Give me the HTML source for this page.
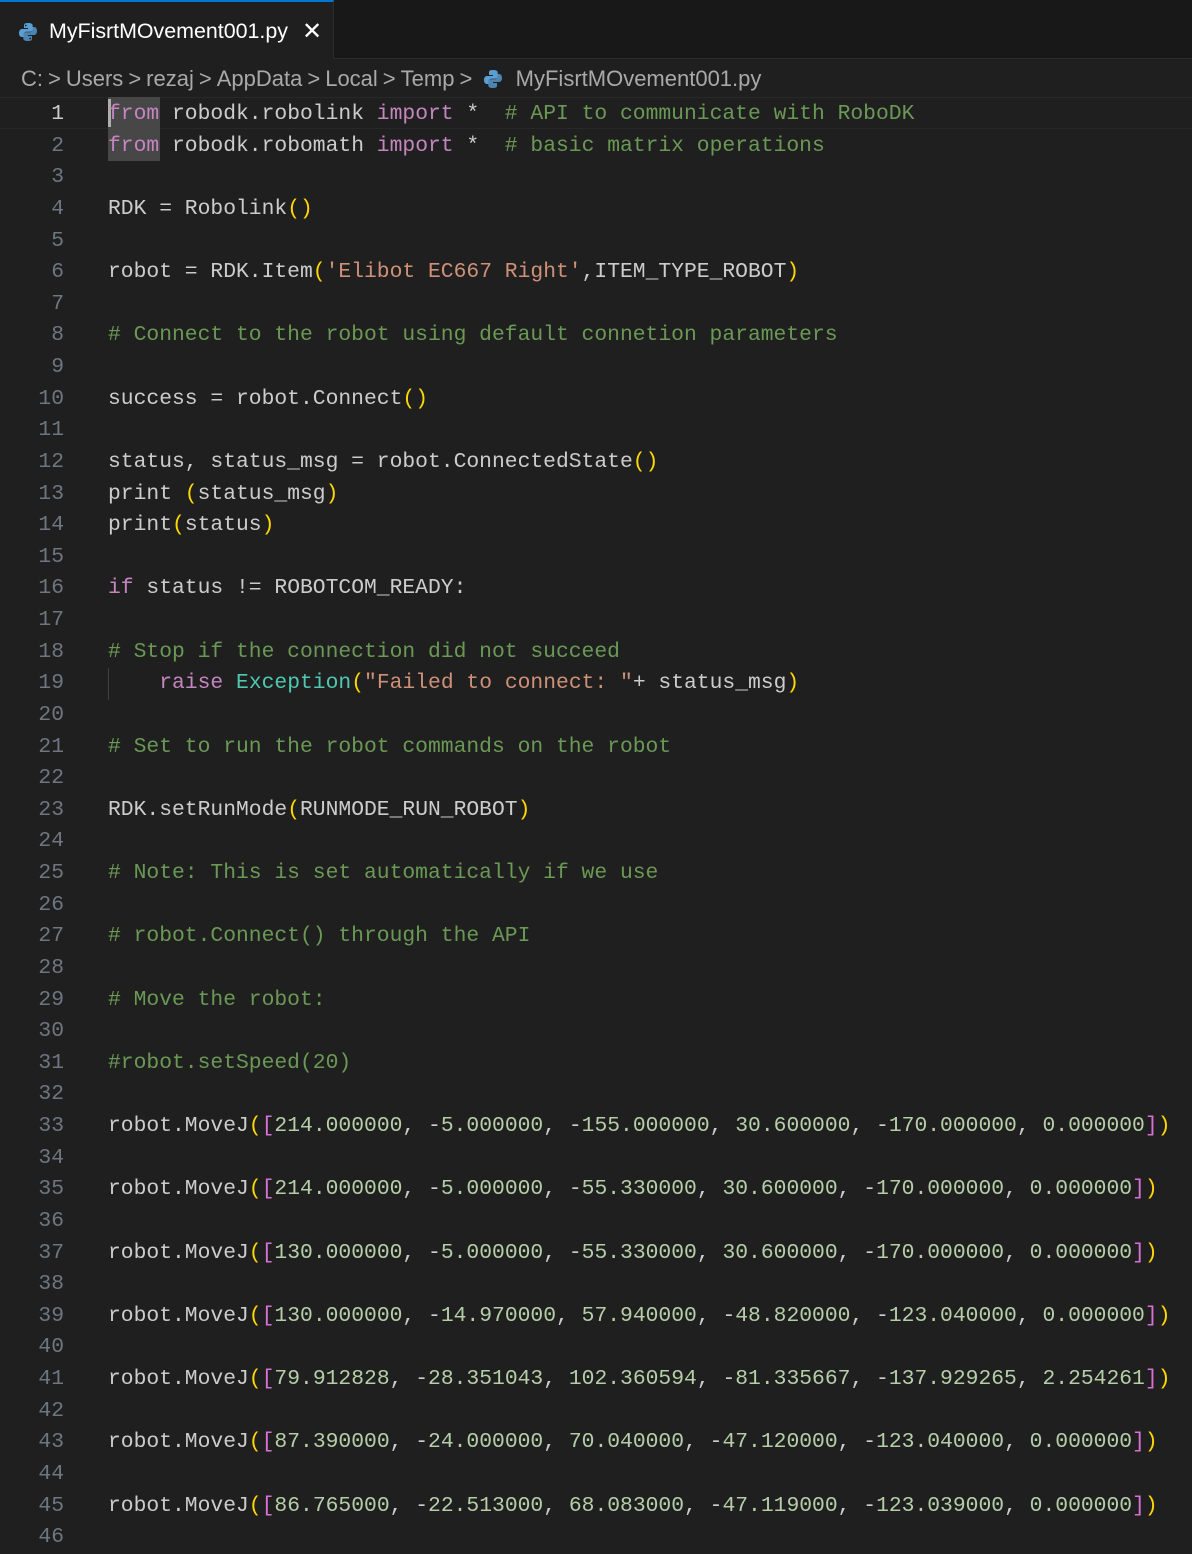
<!DOCTYPE html>
<html><head><meta charset="utf-8"><style>
html,body{margin:0;padding:0;background:#1f1f1f;width:1192px;height:1554px;overflow:hidden;position:relative}
.tabs{position:absolute;left:0;top:0;width:1192px;height:58px;background:#181818;border-bottom:1px solid #2b2b2b}
.tab{position:absolute;left:0;top:0;width:334px;height:59px;background:#1f1f1f;border-top:2px solid #0078d4;box-sizing:border-box;border-right:1px solid #2b2b2b}
.tab .name{position:absolute;left:49px;top:17px;font:21.4px "Liberation Sans",sans-serif;color:#fff}
.tab .x{position:absolute;left:302px;top:15px;font:24px "Liberation Sans",sans-serif;color:#fff}
.crumb{position:absolute;left:21px;top:66px;font:22px "Liberation Sans",sans-serif;color:#a9a9a9;white-space:pre}
.crumb .sep{margin:0 5px}
.code{position:absolute;left:0;top:97px;width:1192px;overflow:hidden;font:21.33px "Liberation Mono",monospace;color:#cccccc}
.l{height:31.64px;line-height:31.64px;position:relative;white-space:pre}
.ln{position:absolute;left:0;top:2px;width:64px;text-align:right;color:#6e7681}
.ln.a{color:#cccccc}
.t{position:absolute;left:108px;top:2px}
.k{color:#c586c0}.c{color:#6a9955}.s{color:#ce9178}.n{color:#b5cea8}.y{color:#ffd700}.p{color:#da70d6}.e{color:#4ec9b0}
.hlb{position:absolute;left:108px;width:52px;height:32px;background:#474747}
.cur{position:absolute;left:0;top:97px;width:1192px;height:30px;border-top:1px solid #282828;border-bottom:1px solid #282828}
</style></head><body>
<div class="tabs"><div class="tab">
<svg style="position:absolute;left:18px;top:20px" width="20" height="20" viewBox="0 0 20 20"><path d="M9.8 1C6 1 6 2.6 6 3.5V6h4v1H4.3C2.5 7 1 8.3 1 11s1.3 4 3 4h1.5v-2.5c0-1.6 1.3-2.8 2.9-2.8h4c1.3 0 2.3-1 2.3-2.3V3.5C14.7 2 13.3 1 9.8 1zM7.8 2.6a.9.9 0 110 1.8.9.9 0 010-1.8z" fill="#5a9fd4"/><path d="M10.2 19c3.8 0 3.8-1.6 3.8-2.5V14h-4v-1h5.7c1.8 0 3.3-1.3 3.3-4s-1.3-4-3-4h-1.5v2.5c0 1.6-1.3 2.8-2.9 2.8h-4c-1.3 0-2.3 1-2.3 2.3v3.9C5.3 18 6.7 19 10.2 19zm2-1.6a.9.9 0 110-1.8.9.9 0 010 1.8z" fill="#5a9fd4" opacity=".8"/></svg>
<span class="name">MyFisrtMOvement001.py</span><span class="x">✕</span></div></div>
<div class="crumb">C:<span class="sep">&gt;</span>Users<span class="sep">&gt;</span>rezaj<span class="sep">&gt;</span>AppData<span class="sep">&gt;</span>Local<span class="sep">&gt;</span>Temp<span class="sep">&gt;</span> <svg width="20" height="20" viewBox="0 0 20 20" style="vertical-align:-3px"><path d="M9.8 1C6 1 6 2.6 6 3.5V6h4v1H4.3C2.5 7 1 8.3 1 11s1.3 4 3 4h1.5v-2.5c0-1.6 1.3-2.8 2.9-2.8h4c1.3 0 2.3-1 2.3-2.3V3.5C14.7 2 13.3 1 9.8 1z" fill="#5a9fd4"/><path d="M10.2 19c3.8 0 3.8-1.6 3.8-2.5V14h-4v-1h5.7c1.8 0 3.3-1.3 3.3-4s-1.3-4-3-4h-1.5v2.5c0 1.6-1.3 2.8-2.9 2.8h-4c-1.3 0-2.3 1-2.3 2.3v3.9C5.3 18 6.7 19 10.2 19z" fill="#5a9fd4" opacity=".8"/></svg>  MyFisrtMOvement001.py</div>
<div class="cur"></div>
<div class="hlb" style="top:97px"></div>
<div class="hlb" style="top:129px"></div>
<div style="position:absolute;left:108px;top:99px;width:3px;height:28px;background:#aeafad"></div>
<div style="position:absolute;left:108px;top:668px;width:1px;height:32px;background:#404040"></div>
<div class="code">
<div class="l"><span class="ln a">1</span><span class="t"><span class="k">from</span> robodk.robolink <span class="k">import</span> *  <span class="c"># API to communicate with RoboDK</span></span></div>
<div class="l"><span class="ln">2</span><span class="t"><span class="k">from</span> robodk.robomath <span class="k">import</span> *  <span class="c"># basic matrix operations</span></span></div>
<div class="l"><span class="ln">3</span></div>
<div class="l"><span class="ln">4</span><span class="t">RDK = Robolink<span class="y">()</span></span></div>
<div class="l"><span class="ln">5</span></div>
<div class="l"><span class="ln">6</span><span class="t">robot = RDK.Item<span class="y">(</span><span class="s">'Elibot EC667 Right'</span>,ITEM_TYPE_ROBOT<span class="y">)</span></span></div>
<div class="l"><span class="ln">7</span></div>
<div class="l"><span class="ln">8</span><span class="t"><span class="c"># Connect to the robot using default connetion parameters</span></span></div>
<div class="l"><span class="ln">9</span></div>
<div class="l"><span class="ln">10</span><span class="t">success = robot.Connect<span class="y">()</span></span></div>
<div class="l"><span class="ln">11</span></div>
<div class="l"><span class="ln">12</span><span class="t">status, status_msg = robot.ConnectedState<span class="y">()</span></span></div>
<div class="l"><span class="ln">13</span><span class="t">print <span class="y">(</span>status_msg<span class="y">)</span></span></div>
<div class="l"><span class="ln">14</span><span class="t">print<span class="y">(</span>status<span class="y">)</span></span></div>
<div class="l"><span class="ln">15</span></div>
<div class="l"><span class="ln">16</span><span class="t"><span class="k">if</span> status != ROBOTCOM_READY:</span></div>
<div class="l"><span class="ln">17</span></div>
<div class="l"><span class="ln">18</span><span class="t"><span class="c"># Stop if the connection did not succeed</span></span></div>
<div class="l"><span class="ln">19</span><span class="t">    <span class="k">raise</span> <span class="e">Exception</span><span class="y">(</span><span class="s">"Failed to connect: "</span>+ status_msg<span class="y">)</span></span></div>
<div class="l"><span class="ln">20</span></div>
<div class="l"><span class="ln">21</span><span class="t"><span class="c"># Set to run the robot commands on the robot</span></span></div>
<div class="l"><span class="ln">22</span></div>
<div class="l"><span class="ln">23</span><span class="t">RDK.setRunMode<span class="y">(</span>RUNMODE_RUN_ROBOT<span class="y">)</span></span></div>
<div class="l"><span class="ln">24</span></div>
<div class="l"><span class="ln">25</span><span class="t"><span class="c"># Note: This is set automatically if we use</span></span></div>
<div class="l"><span class="ln">26</span></div>
<div class="l"><span class="ln">27</span><span class="t"><span class="c"># robot.Connect() through the API</span></span></div>
<div class="l"><span class="ln">28</span></div>
<div class="l"><span class="ln">29</span><span class="t"><span class="c"># Move the robot:</span></span></div>
<div class="l"><span class="ln">30</span></div>
<div class="l"><span class="ln">31</span><span class="t"><span class="c">#robot.setSpeed(20)</span></span></div>
<div class="l"><span class="ln">32</span></div>
<div class="l"><span class="ln">33</span><span class="t">robot.MoveJ<span class="y">(</span><span class="p">[</span><span class="n">214.000000</span>, -<span class="n">5.000000</span>, -<span class="n">155.000000</span>, <span class="n">30.600000</span>, -<span class="n">170.000000</span>, <span class="n">0.000000</span><span class="p">]</span><span class="y">)</span></span></div>
<div class="l"><span class="ln">34</span></div>
<div class="l"><span class="ln">35</span><span class="t">robot.MoveJ<span class="y">(</span><span class="p">[</span><span class="n">214.000000</span>, -<span class="n">5.000000</span>, -<span class="n">55.330000</span>, <span class="n">30.600000</span>, -<span class="n">170.000000</span>, <span class="n">0.000000</span><span class="p">]</span><span class="y">)</span></span></div>
<div class="l"><span class="ln">36</span></div>
<div class="l"><span class="ln">37</span><span class="t">robot.MoveJ<span class="y">(</span><span class="p">[</span><span class="n">130.000000</span>, -<span class="n">5.000000</span>, -<span class="n">55.330000</span>, <span class="n">30.600000</span>, -<span class="n">170.000000</span>, <span class="n">0.000000</span><span class="p">]</span><span class="y">)</span></span></div>
<div class="l"><span class="ln">38</span></div>
<div class="l"><span class="ln">39</span><span class="t">robot.MoveJ<span class="y">(</span><span class="p">[</span><span class="n">130.000000</span>, -<span class="n">14.970000</span>, <span class="n">57.940000</span>, -<span class="n">48.820000</span>, -<span class="n">123.040000</span>, <span class="n">0.000000</span><span class="p">]</span><span class="y">)</span></span></div>
<div class="l"><span class="ln">40</span></div>
<div class="l"><span class="ln">41</span><span class="t">robot.MoveJ<span class="y">(</span><span class="p">[</span><span class="n">79.912828</span>, -<span class="n">28.351043</span>, <span class="n">102.360594</span>, -<span class="n">81.335667</span>, -<span class="n">137.929265</span>, <span class="n">2.254261</span><span class="p">]</span><span class="y">)</span></span></div>
<div class="l"><span class="ln">42</span></div>
<div class="l"><span class="ln">43</span><span class="t">robot.MoveJ<span class="y">(</span><span class="p">[</span><span class="n">87.390000</span>, -<span class="n">24.000000</span>, <span class="n">70.040000</span>, -<span class="n">47.120000</span>, -<span class="n">123.040000</span>, <span class="n">0.000000</span><span class="p">]</span><span class="y">)</span></span></div>
<div class="l"><span class="ln">44</span></div>
<div class="l"><span class="ln">45</span><span class="t">robot.MoveJ<span class="y">(</span><span class="p">[</span><span class="n">86.765000</span>, -<span class="n">22.513000</span>, <span class="n">68.083000</span>, -<span class="n">47.119000</span>, -<span class="n">123.039000</span>, <span class="n">0.000000</span><span class="p">]</span><span class="y">)</span></span></div>
<div class="l"><span class="ln">46</span></div>
</div>
</body></html>
